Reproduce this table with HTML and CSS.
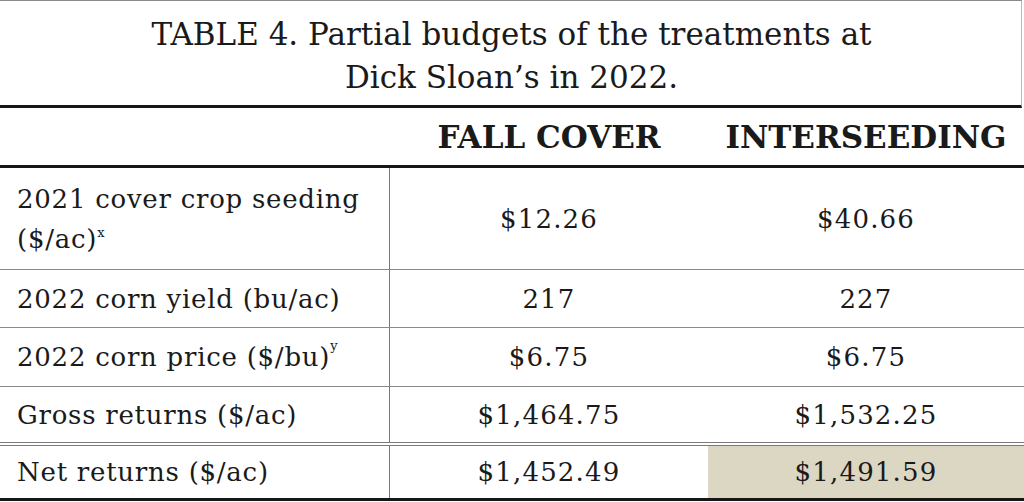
FILE: index.html
```html
<!DOCTYPE html>
<html lang="en">
<head>
<meta charset="utf-8">
<title>Table 4</title>
<link rel="stylesheet" href="styles.css">
</head>
<body>
<div class="sheet">
  <div class="title">TABLE 4. Partial budgets of the treatments at<br>Dick Sloan’s in 2022.</div>
  <div class="row head">
    <div class="cell"></div>
    <div class="cell num">FALL COVER</div>
    <div class="cell num">INTERSEEDING</div>
  </div>
  <div class="row r1">
    <div class="cell label">2021 cover crop seeding<br>($/ac)<sup>x</sup></div>
    <div class="cell num">$12.26</div>
    <div class="cell num">$40.66</div>
  </div>
  <div class="row r2">
    <div class="cell label">2022 corn yield (bu/ac)</div>
    <div class="cell num">217</div>
    <div class="cell num">227</div>
  </div>
  <div class="row r3">
    <div class="cell label">2022 corn price ($/bu)<sup>y</sup></div>
    <div class="cell num">$6.75</div>
    <div class="cell num">$6.75</div>
  </div>
  <div class="row r4">
    <div class="cell label">Gross returns ($/ac)</div>
    <div class="cell num">$1,464.75</div>
    <div class="cell num">$1,532.25</div>
  </div>
  <div class="row r5">
    <div class="cell label">Net returns ($/ac)</div>
    <div class="cell num">$1,452.49</div>
    <div class="cell num hl">$1,491.59</div>
  </div>
</div>
</body>
</html>
```
FILE: styles.css
```css
* { box-sizing: border-box; }
html, body { margin: 0; padding: 0; background: #fff; }
body {
  font-family: "DejaVu Serif", "Liberation Serif", serif;
  color: #1a1a1a;
  width: 1024px;
  height: 502px;
  overflow: hidden;
}
.sheet { display: flex; flex-direction: column; }
.title {
  height: 108px;
  border-top: 1px solid #8a8a8a;
  border-right: 1px solid #b8b8b8;
  margin-right: 2px;
  border-bottom: 3px solid #161616;
  padding-top: 12px;
  padding-left: 2px;
  text-align: center;
  font-size: 31px;
  line-height: 43px;
}
.row {
  display: grid;
  grid-template-columns: 390px 318px 1fr;
}
.cell {
  display: flex;
  align-items: center;
}
.label {
  padding-left: 17px;
  font-size: 26px;
  letter-spacing: 0.75px;
  line-height: 40px;
  border-right: 1px solid #7a7a7a;
}
.num {
  justify-content: center;
  font-size: 26px;
  letter-spacing: 1.2px;
}
.head {
  height: 60px;
  border-bottom: 3px solid #161616;
}
.head .num {
  font-weight: bold;
  font-size: 31px;
  letter-spacing: 0;
}
.r1 { height: 102px; border-bottom: 1px solid #8a8a8a; }
.r1 .label { display: block; padding-top: 11px; }
.r2 { height: 58px; border-bottom: 1px solid #8a8a8a; }
.r3 { height: 59px; border-bottom: 1px solid #8a8a8a; }
.r4 { height: 59px; border-bottom: 4px double #7a7a7a; }
.r5 { height: 55px; border-bottom: 3px solid #161616; }
.hl { background: #dbd7c3; }
sup {
  font-size: 13px;
  letter-spacing: 0;
  vertical-align: 0;
  position: relative;
  top: -11px;
  line-height: 0;
}
```
